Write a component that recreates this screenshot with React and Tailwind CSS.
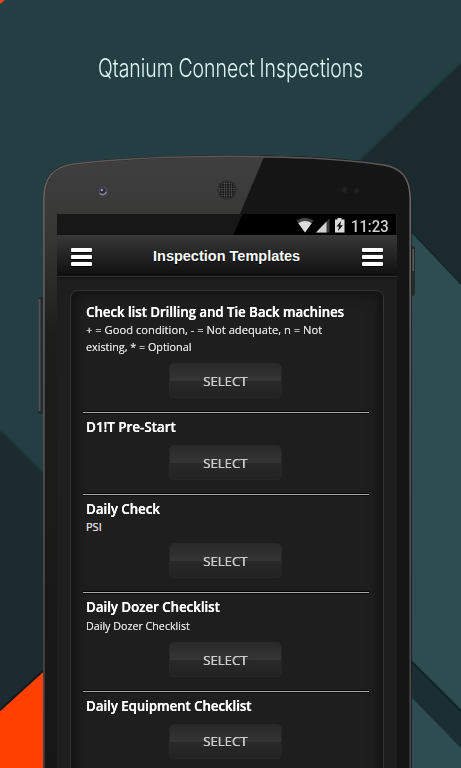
import React, { useLayoutEffect, useRef } from "react";

// Condenses or widens a single line of text to a given width.
function Fit({ width, className = "", children }) {
  const ref = useRef(null);
  useLayoutEffect(() => {
    const el = ref.current;
    el.style.transform = `scaleX(${width / el.offsetWidth})`;
  }, [width]);
  return (
    <span ref={ref} className={`inline-block origin-left whitespace-nowrap ${className}`}>
      {children}
    </span>
  );
}

const templates = [
  {
    title: "Check list Drilling and Tie Back machines",
    width: 258,
    lines: [
      ["+ = Good condition, - = Not adequate, n = Not", 236],
      ["existing, * = Optional", 105],
    ],
  },
  { title: "D1!T Pre-Start", width: 90, lines: [] },
  { title: "Daily Check", width: 74, lines: [["PSI", 16]] },
  { title: "Daily Dozer Checklist", width: 134, lines: [["Daily Dozer Checklist", 104]] },
  { title: "Daily Equipment Checklist", width: 165, lines: [] },
];

const BODY = "M43 790V197C43 178 51 166 73 163C122 157 172 155.500 227 155.500C290 155.500 337 157 385 164C403 167 411.500 177 411.500 199V790Z";

function Backdrop() {
  return (
    <svg className="absolute inset-0" width="461" height="768" viewBox="0 0 461 768">
      <defs>
        <linearGradient id="body" x1="0" y1="0" x2="0" y2="1">
          <stop offset="0" stopColor="#3f3f3f" />
          <stop offset="0.13" stopColor="#363635" />
          <stop offset="0.28" stopColor="#1d1d1c" />
          <stop offset="1" stopColor="#161616" />
        </linearGradient>
        <linearGradient id="rim" x1="0" y1="0" x2="0" y2="1">
          <stop offset="0" stopColor="#5c5657" />
          <stop offset="0.08" stopColor="#6b6b6b" />
          <stop offset="0.5" stopColor="#555" />
          <stop offset="1" stopColor="#414246" />
        </linearGradient>
        <pattern id="mesh" width="2.4" height="2.4" patternUnits="userSpaceOnUse">
          <rect width="2.4" height="2.4" fill="#151515" />
          <circle cx="1.2" cy="1.2" r="0.75" fill="#666" />
        </pattern>
        <filter id="soft" x="-20%" y="-20%" width="140%" height="140%">
          <feGaussianBlur stdDeviation="1.500" />
        </filter>
        <clipPath id="bodyClip"><path d={BODY} /></clipPath>
      </defs>
      <rect width="461" height="768" fill="#243f43" />
      <path d="M0 0H5L0 4Z" fill="#e8431b" />
      <path d="M461 64L361 160L413 232L461 284Z" fill="#0d1a1d" opacity=".7" filter="url(#soft)" />
      <path d="M461 64L361 160V232H413L461 284Z" fill="#1b2a2e" />
      <path d="M405 225L461 284V768H405Z" fill="#2e4d50" />
      <path d="M408 228L461 284" stroke="#13272b" strokeWidth="1.500" />
      <path d="M411 661L461 711V748L411 697Z" fill="#1a2e33" />
      <path d="M411 661L461 711" stroke="#122428" strokeWidth="2" />
      <path d="M0 431L45 476V768H0Z" fill="#0d1a1d" opacity=".7" filter="url(#soft)" />
      <path d="M0 431L45 476V768H0Z" fill="#1c2b2f" />
      <path d="M0 711L45 670V768H0Z" fill="#ff4000" />
      <path d="M0 710L45 669" stroke="#101415" strokeWidth="2" opacity=".8" />
      <rect x="38" y="297" width="7" height="117" rx="2" fill="#252a30" />
      <rect x="38.500" y="299" width="2" height="112" fill="#4c5355" />
      <rect x="409" y="246" width="6" height="50" rx="2" fill="#272b2d" />
      <rect x="412.500" y="249" width="1.500" height="22" fill="#555d5f" />
      <path d={BODY} fill="url(#body)" />
      <path d="M267 150H420V800H200V300L233 230Z" fill="#151515" clipPath="url(#bodyClip)" />
      <path d={BODY} fill="none" stroke="#252323" strokeWidth="4" clipPath="url(#bodyClip)" />
      <path d={BODY} fill="none" stroke="url(#rim)" strokeWidth="1.500" transform="translate(1.200 1) scale(.994 1)" />
      <circle cx="103" cy="191" r="4.500" fill="#504e56" />
      <circle cx="102.500" cy="190.500" r="3" fill="#292744" />
      <circle cx="101.800" cy="190" r="1.200" fill="#a8a8c4" />
      <path d="M99.500 193.500Q104 196.500 106.500 192" stroke="#87868e" strokeWidth="1.500" fill="none" />
      <circle cx="227" cy="190" r="9.500" fill="#1b1b1b" />
      <circle cx="227" cy="190" r="8" fill="url(#mesh)" />
      <circle cx="227" cy="190" r="8.800" fill="none" stroke="#383838" />
      <circle cx="344.500" cy="190" r="3" fill="#202020" />
      <circle cx="356.500" cy="190.500" r="2.500" fill="#202020" />
    </svg>
  );
}

function Menu() {
  return (
    <div className="mt-[3px] flex w-[21px] flex-col gap-[3.500px]">
      <i className="h-[3.500px] rounded-[1px] bg-white shadow-[0_1px_1px_#000]" />
      <i className="h-[3.500px] rounded-[1px] bg-white shadow-[0_1px_1px_#000]" />
      <i className="h-[3.500px] rounded-[1px] bg-white shadow-[0_1px_1px_#000]" />
    </div>
  );
}

function StatusIcons() {
  return (
    <svg width="50" height="21" viewBox="0 0 50 21">
      <path d="M.500 6.500Q9 .800 17.500 6.500L9 18.500Z" fill="#444" />
      <path d="M2.300 9.200Q9 5 15.700 9.200L9 18.500Z" fill="#dcdcdc" />
      <path d="M20 18.500L33.500 4.500V18.500Z" fill="#3d3d3d" />
      <path d="M20 18.500L30.500 7.500V18.500Z" fill="#d0d0d0" />
      <path d="M39 5.500H41.500V4H45.500V5.500H48.500V18.500H39Z" fill="#dcdcdc" />
      <path d="M45 7L40.500 12.500H43L42 17L47 11.300H44.300Z" fill="#111" />
    </svg>
  );
}

function Template({ item, first }) {
  return (
    <section
      className={`flex flex-col ${first ? "pt-[10px]" : "border-t border-[#a8a8a8] pt-[3px] shadow-[0_-1px_0_#050505,inset_0_1px_0_#0c0c0c]"}`}
    >
      <h2 className="flex h-[20px] items-center pl-[3px] text-[15px] leading-[20px] font-semibold text-white [text-shadow:0.400px_0_0_#fff]">
        <Fit width={item.width}>{item.title}</Fit>
      </h2>
      {item.lines.map(([text, width]) => (
        <p
          key={text}
          className="flex h-[16.700px] items-center pt-[1.500px] pl-[3px] text-[11px] leading-[16px] text-[#e0e0e0] [text-shadow:0_0_0.500px_#d0d0d0]"
        >
          <Fit width={width}>{text}</Fit>
        </p>
      ))}
      <button className="mt-[8.700px] mb-[14.100px] ml-[86px] flex h-[35px] w-[113px] items-center justify-center rounded-[5px] border border-[#282828] bg-[linear-gradient(#292929,#353535_50%,#292929_53%,#222)] pt-px text-[13.500px] font-normal text-[#cccccc] [text-shadow:0.400px_0_0_#cccccc]">
        <Fit width={44}>SELECT</Fit>
      </button>
    </section>
  );
}

export default function App() {
  return (
    <main className="relative h-[768px] w-[461px] overflow-hidden bg-[#243f43]">
      <Backdrop />
      <div className="relative flex h-full flex-col pl-[57px]">
        <h1 className="flex h-[214px] shrink-0 pt-[50px] pl-[41px] font-['Inter','Roboto',sans-serif] text-[25px] leading-[36px] font-light text-[#e2f5f5] [word-spacing:-1px]">
          <Fit width={265}>Qtanium Connect Inspections</Fit>
        </h1>
        <div className="flex h-[554px] w-[340px] flex-col overflow-hidden bg-[#1e1e1e] font-['Open_Sans','Noto_Sans',sans-serif]">
          <div className="flex h-[21px] w-[339px] shrink-0 items-center justify-end bg-[linear-gradient(114deg,#171717_53%,#000_53.500%)] pr-[7px]">
            <StatusIcons />
            <span className="ml-[5px] flex w-[38px] pt-[4px] font-['Roboto',sans-serif] text-[16px] leading-[20px] font-medium text-[#d0d0d0]">
              <Fit width={38}>11:23</Fit>
            </span>
          </div>
          <header className="flex h-[42px] shrink-0 items-center justify-between border-b border-[#333] bg-[linear-gradient(#383838,#0f0f0f)] pr-[14px] pl-[14px] shadow-[0_1px_2px_#111]">
            <Menu />
            <h2 className="mt-[3px] flex w-[148px] font-['Liberation_Sans',Arial,sans-serif] text-[14.500px] font-bold text-white [text-shadow:0_1px_1px_#000]">
              <Fit width={147}>Inspection Templates</Fit>
            </h2>
            <Menu />
          </header>
          <div className="mt-[13px] ml-[13px] h-[600px] w-[314px] shrink-0 rounded-[8px] border-[1.500px] border-[#343434] bg-[#1e1e1e] pr-[14px] pl-[12px] shadow-[inset_0_0_12px_3px_#101010]">
            {templates.map((item, i) => (
              <Template key={item.title} item={item} first={i === 0} />
            ))}
          </div>
        </div>
      </div>
    </main>
  );
}
